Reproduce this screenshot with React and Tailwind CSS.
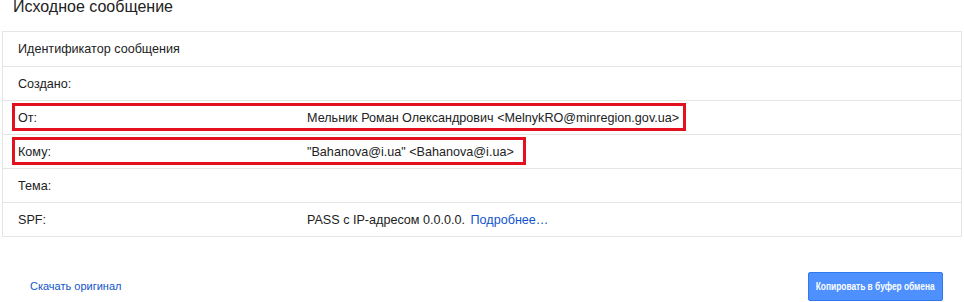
export default function App() {
  const rows = [
    { label: "Идентификатор сообщения", value: null },
    { label: "Создано:", value: null },
    { label: "От:", value: "Мельник Роман Олександрович <MelnykRO@minregion.gov.ua>", box: "w-[674px]" },
    { label: "Кому:", value: "\"Bahanova@i.ua\" <Bahanova@i.ua>", box: "w-[514px]" },
    { label: "Тема:", value: null },
    { label: "SPF:", value: "spf" },
  ];
  return (
    <div className="w-[964px] h-[302px] bg-white overflow-hidden text-[#222] font-['Liberation_Sans',Arial,sans-serif]">
      <div className="h-[31px] pl-[13px] pt-[1px]">
        <div className="text-[16px] leading-[16px] -mt-[2px]">Исходное сообщение</div>
      </div>
      <div className="ml-[2px] w-[960px] border border-[#e5e5e5]">
        {rows.map((r, i) => (
          <div
            key={i}
            className={`relative flex items-center h-[34px] pt-[1px] text-[12.6px] ${i > 0 ? "border-t border-[#e5e5e5]" : ""}`}
          >
            <div className="w-[288px] pl-[15px] shrink-0">{r.label}</div>
            <div className="pl-[16px]">
              {r.value === "spf" ? (
                <span>
                  PASS с IP-адресом 0.0.0.0.{" "}
                  <span className="text-[#1155cc] ml-[2px]">Подробнее…</span>
                </span>
              ) : (
                r.value
              )}
            </div>
            {r.box && (
              <div className={`absolute left-[9px] top-[2px] h-[28px] border-[3px] border-[#e3111f] ${r.box}`} />
            )}
          </div>
        ))}
      </div>
      <div className="flex items-center justify-between pl-[30px] pr-[21px] mt-[35px]">
        <span className="text-[11px] text-[#1155cc] -mt-[1px]">Скачать оригинал</span>
        <div className="w-[135px] h-[29px] flex items-center justify-center whitespace-nowrap rounded-[2px] bg-[#4d90fe] border border-[#3079ed] text-white">
          <span className="inline-block text-[11px] font-bold scale-x-[0.76]">Копировать в буфер обмена</span>
        </div>
      </div>
    </div>
  );
}
